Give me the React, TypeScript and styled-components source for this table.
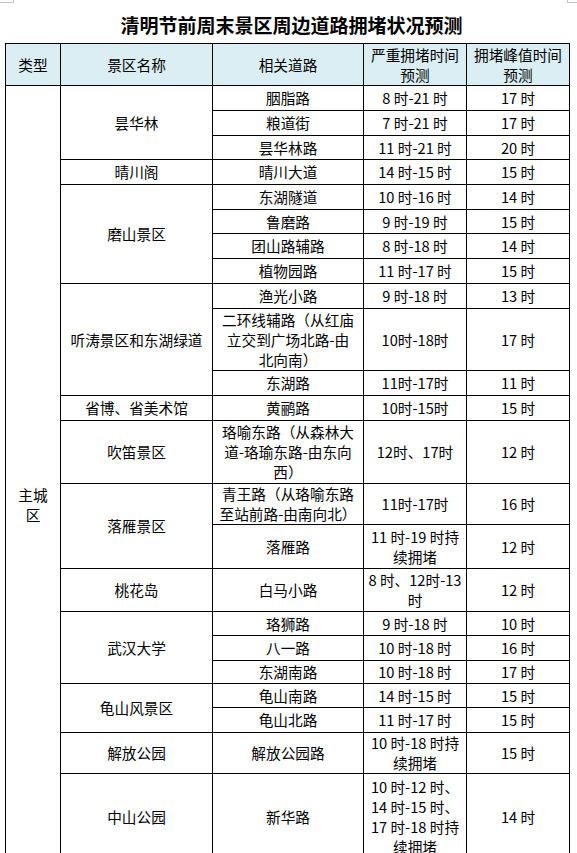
import React from "react";
import styled, { createGlobalStyle } from "styled-components";

const GlobalStyle = createGlobalStyle`
  html, body {
    margin: 0;
    padding: 0;
    background: #ffffff;
  }
`;

const font = `"Noto Sans CJK SC", "Noto Sans", sans-serif`;

const Page = styled.div`
  position: relative;
  width: 577px;
  padding: 0 0 0 5px;
  box-sizing: border-box;
  font-family: ${font};
  color: #000000;
`;

const CornerMark = styled.span<{ $side: "left" | "right" }>`
  position: absolute;
  top: 0;
  height: 2px;
  border-bottom: 1px solid #c4c4c4;
  ${(p) =>
    p.$side === "left"
      ? "left: 0; width: 13px; border-right: 1px solid #c4c4c4;"
      : "left: 567px; width: 10px; border-left: 1px solid #c4c4c4;"}
`;

const Title = styled.h1`
  margin: 0;
  height: 43px;
  padding: 6px 0 0 8px;
  box-sizing: border-box;
  font-size: 19px;
  line-height: 37px;
  font-weight: 700;
  text-align: center;
  width: 565px;
`;

const Table = styled.table`
  width: 565px;
  border-collapse: collapse;
  table-layout: fixed;
  font-size: 14.67px;
  line-height: 20px;
`;

const HeadCell = styled.th`
  background: #daeef3;
  border: 1px solid #000000;
  font-weight: 400;
  text-align: center;
  vertical-align: middle;
  padding: 0 4px;
`;

const Row = styled.tr<{ $h: number }>`
  height: ${(p) => p.$h}px;
`;

const Cell = styled.td`
  border: 1px solid #000000;
  text-align: center;
  vertical-align: middle;
  padding: 0 4px;
  white-space: nowrap;
`;

const CategoryCell = styled(Cell)`
  padding: 64px 6px 0;
  white-space: normal;
`;

type Road = { road: React.ReactNode; jam: React.ReactNode; peak: string; h: number };
type Spot = { name: string; roads: Road[] };

const spots: Spot[] = [
  {
    name: "昙华林",
    roads: [
      { road: "胭脂路", jam: "8 时-21 时", peak: "17 时", h: 25 },
      { road: "粮道街", jam: "7 时-21 时", peak: "17 时", h: 25 },
      { road: "昙华林路", jam: "11 时-21 时", peak: "20 时", h: 24 },
    ],
  },
  { name: "晴川阁", roads: [{ road: "晴川大道", jam: "14 时-15 时", peak: "15 时", h: 25 }] },
  {
    name: "磨山景区",
    roads: [
      { road: "东湖隧道", jam: "10 时-16 时", peak: "14 时", h: 25 },
      { road: "鲁磨路", jam: "9 时-19 时", peak: "15 时", h: 24 },
      { road: "团山路辅路", jam: "8 时-18 时", peak: "14 时", h: 25 },
      { road: "植物园路", jam: "11 时-17 时", peak: "15 时", h: 25 },
    ],
  },
  {
    name: "听涛景区和东湖绿道",
    roads: [
      { road: "渔光小路", jam: "9 时-18 时", peak: "13 时", h: 25 },
      {
        road: (
          <>
            二环线辅路（从红庙
            <br />
            立交到广场北路-由
            <br />
            北向南）
          </>
        ),
        jam: "10时-18时",
        peak: "17 时",
        h: 62,
      },
      { road: "东湖路", jam: "11时-17时", peak: "11 时", h: 25 },
    ],
  },
  { name: "省博、省美术馆", roads: [{ road: "黄鹂路", jam: "10时-15时", peak: "15 时", h: 25 }] },
  {
    name: "吹笛景区",
    roads: [
      {
        road: (
          <>
            珞喻东路（从森林大
            <br />
            道-珞瑜东路-由东向
            <br />
            西）
          </>
        ),
        jam: "12时、17时",
        peak: "12 时",
        h: 63,
      },
    ],
  },
  {
    name: "落雁景区",
    roads: [
      {
        road: (
          <>
            青王路（从珞喻东路
            <br />
            至站前路-由南向北）
          </>
        ),
        jam: "11时-17时",
        peak: "16 时",
        h: 41,
      },
      {
        road: "落雁路",
        jam: (
          <>
            11 时-19 时持
            <br />
            续拥堵
          </>
        ),
        peak: "12 时",
        h: 44,
      },
    ],
  },
  {
    name: "桃花岛",
    roads: [
      {
        road: "白马小路",
        jam: (
          <>
            8 时、12时-13
            <br />
            时
          </>
        ),
        peak: "12 时",
        h: 43,
      },
    ],
  },
  {
    name: "武汉大学",
    roads: [
      { road: "珞狮路", jam: "9 时-18 时", peak: "10 时", h: 24 },
      { road: "八一路", jam: "10 时-18 时", peak: "16 时", h: 25 },
      { road: "东湖南路", jam: "10 时-18 时", peak: "17 时", h: 23 },
    ],
  },
  {
    name: "龟山风景区",
    roads: [
      { road: "龟山南路", jam: "14 时-15 时", peak: "15 时", h: 24 },
      { road: "龟山北路", jam: "11 时-17 时", peak: "15 时", h: 25 },
    ],
  },
  {
    name: "解放公园",
    roads: [
      {
        road: "解放公园路",
        jam: (
          <>
            10 时-18 时持
            <br />
            续拥堵
          </>
        ),
        peak: "15 时",
        h: 41,
      },
    ],
  },
  {
    name: "中山公园",
    roads: [
      {
        road: "新华路",
        jam: (
          <>
            10 时-12 时、
            <br />
            14 时-15 时、
            <br />
            17 时-18 时持
            <br />
            续拥堵
          </>
        ),
        peak: "14 时",
        h: 86,
      },
    ],
  },
];

const totalRows = spots.reduce((n, s) => n + s.roads.length, 0);

const App: React.FC = () => {
  let first = true;
  return (
    <>
      <GlobalStyle />
      <Page>
        <CornerMark $side="left" />
        <CornerMark $side="right" />
        <Title>清明节前周末景区周边道路拥堵状况预测</Title>
        <Table>
          <colgroup>
            <col style={{ width: 55 }} />
            <col style={{ width: 152 }} />
            <col style={{ width: 151 }} />
            <col style={{ width: 103 }} />
            <col style={{ width: 103 }} />
          </colgroup>
          <thead>
            <Row $h={42}>
              <HeadCell>类型</HeadCell>
              <HeadCell>景区名称</HeadCell>
              <HeadCell>相关道路</HeadCell>
              <HeadCell>
                严重拥堵时间
                <br />
                预测
              </HeadCell>
              <HeadCell>
                拥堵峰值时间
                <br />
                预测
              </HeadCell>
            </Row>
          </thead>
          <tbody>
            {spots.map((spot) =>
              spot.roads.map((r, i) => {
                const showCat = first;
                first = false;
                return (
                  <Row $h={r.h} key={spot.name + i}>
                    {showCat && <CategoryCell rowSpan={totalRows}>主城区</CategoryCell>}
                    {i === 0 && <Cell rowSpan={spot.roads.length}>{spot.name}</Cell>}
                    <Cell>{r.road}</Cell>
                    <Cell>{r.jam}</Cell>
                    <Cell>{r.peak}</Cell>
                  </Row>
                );
              })
            )}
          </tbody>
        </Table>
      </Page>
    </>
  );
};

export default App;
